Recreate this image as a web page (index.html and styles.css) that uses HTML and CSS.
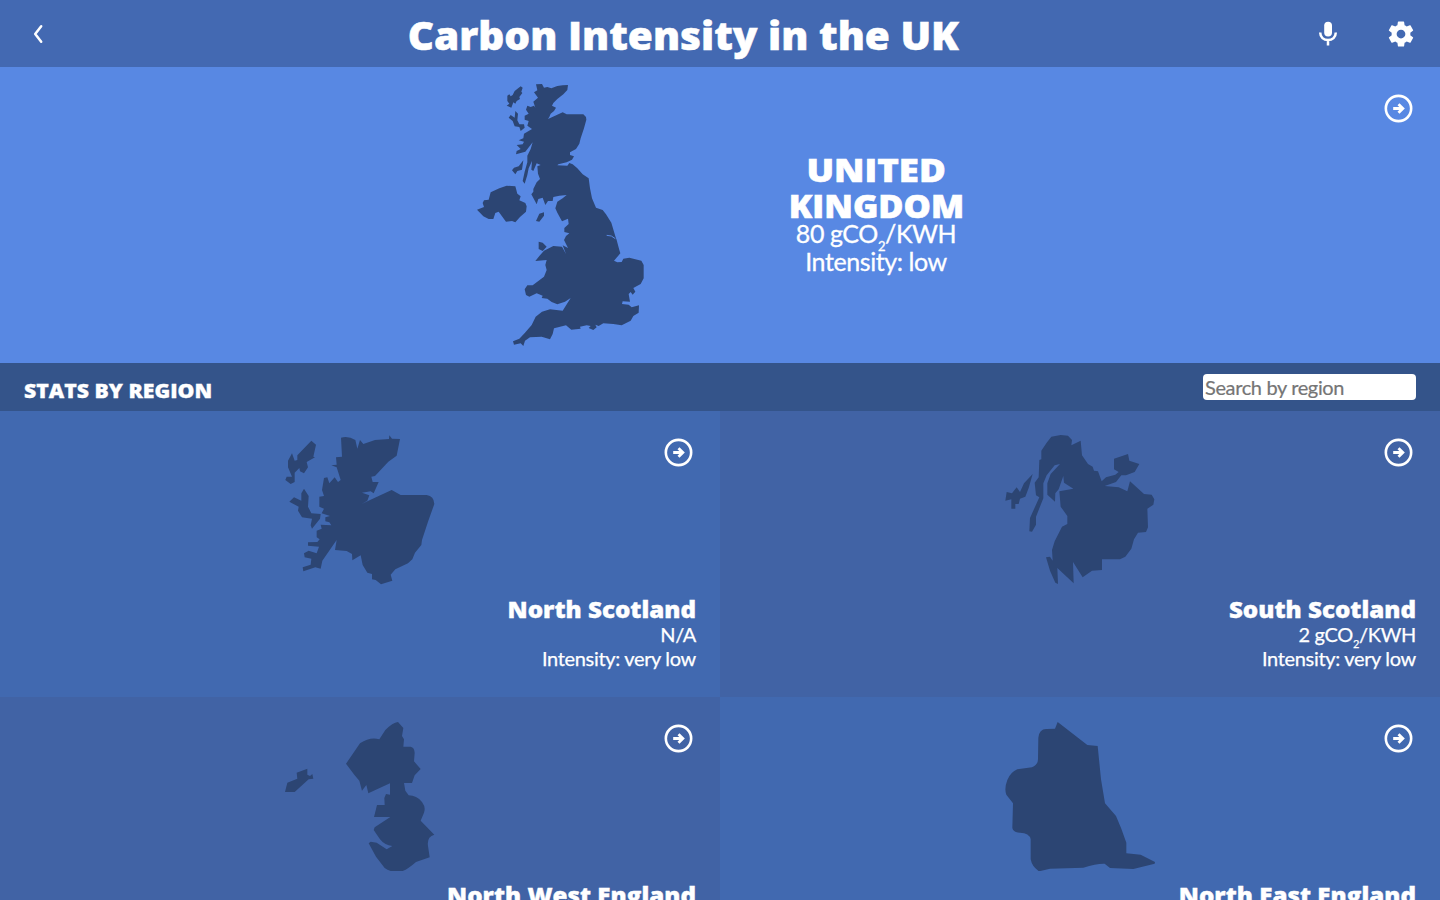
FILE: index.html
```html
<!DOCTYPE html>
<html lang="en">
<head>
<meta charset="utf-8">
<title>Carbon Intensity in the UK</title>
<link rel="stylesheet" href="styles.css">
</head>
<body>
<svg class="symbols" aria-hidden="true">
  <symbol id="arrow" viewBox="0 0 30 30">
    <circle cx="15" cy="15" r="13.1" fill="none" stroke="#fff" stroke-width="2.7"/>
    <path d="M9.5 15h9M15 10.5l4.5 4.5-4.5 4.5" fill="none" stroke="#fff" stroke-width="2.9"/>
  </symbol>
</svg>
<header class="topbar">
  <button class="back" aria-label="Back"><svg width="12" height="20" viewBox="0 0 12 20"><path d="M9.2 2.3 3.2 10l6 7.7" fill="none" stroke="#fff" stroke-width="2.5" stroke-linecap="round" stroke-linejoin="round"/></svg></button>
  <h1 class="title">Carbon Intensity in the UK</h1>
  <div class="tools">
    <svg width="28" height="28" viewBox="0 0 28 28"><rect x="10.2" y="1.7" width="7.8" height="14.7" rx="3.9" fill="#fff"/><path d="M6.2 12.6c0 4.5 3.4 7.5 7.8 7.5s7.8-3 7.8-7.5M14 20v5.5" fill="none" stroke="#fff" stroke-width="2.5"/></svg>
    <svg width="30" height="30" viewBox="0 0 24 24"><path fill="#fff" d="M19.43 12.98c.04-.32.07-.64.07-.98s-.03-.66-.07-.98l2.11-1.65c.19-.15.24-.42.12-.64l-2-3.46c-.12-.22-.39-.3-.61-.22l-2.49 1c-.52-.4-1.08-.73-1.69-.98l-.38-2.65C14.46 2.18 14.25 2 14 2h-4c-.25 0-.46.18-.49.42l-.38 2.65c-.61.25-1.17.59-1.69.98l-2.49-1c-.23-.09-.49 0-.61.22l-2 3.46c-.13.22-.07.49.12.64l2.11 1.65c-.04.32-.07.65-.07.98s.03.66.07.98l-2.11 1.65c-.19.15-.24.42-.12.64l2 3.46c.12.22.39.3.61.22l2.49-1c.52.4 1.08.73 1.69.98l.38 2.65c.03.24.24.42.49.42h4c.25 0 .46-.18.49-.42l.38-2.65c.61-.25 1.17-.59 1.69-.98l2.49 1c.23.09.49 0 .61-.22l2-3.46c.12-.22.07-.49-.12-.64l-2.11-1.65zM12 15.5c-1.93 0-3.5-1.57-3.5-3.5s1.57-3.5 3.5-3.5 3.5 1.57 3.5 3.5-1.57 3.5-3.5 3.5z"/></svg>
  </div>
</header>

<section class="hero">
  <svg class="uk" viewBox="21 24 504 795">
    <path d="M198 28 216 27 222 38 232 36 244 40 262 33 278 31 294 30 292 45 280 58 262 72 250 84 246 92 258 98 252 108 242 116 238 126 234 132 252 124 278 112 290 118 340 118 348 126 349 134 342 160 332 190 328 206 318 222 300 232 300 240 312 244 306 254 290 262 265 268 262 271 292 272 298 264 308 268 322 280 338 298 356 310 360 340 366 370 378 398 398 405 408 418 424 443 436 484 440 495 448 525 451 535 432 557 442 562 455 561 460 551 478 548 514 557 521 570 521 610 512 627 490 639 496 650 488 659 482 651 476 657 480 680 458 679 456 687 476 689 485 697 507 691 506 713 490 723 482 737 455 751 430 747 400 745 386 753 376 749 380 757 370 765 356 759 362 753 350 751 330 755 332 761 304 764 288 751 252 760 248 777 240 793 215 785 180 787 165 797 160 813 152 805 132 809 129 799 148 791 165 773 185 750 197 725 216 710 240 703 278 707 302 669 285 680 262 688 245 681 232 671 215 669 218 662 200 655 178 665 168 660 164 643 172 631 188 631 222 605 230 585 226 570 230 555 196 558 208 543 222 527 250 513 276 515 288 537 278 511 294 519 282 495 288 483 298 475 283 471 283 459 296 447 294 431 276 439 262 413 256 400 262 380 278 370 290 360 268 362 250 366 248 378 234 378 226 390 218 368 205 372 200 388 184 358 190 350 190 342 200 322 210 312 204 296 202 274 212 270 200 265 190 288 184 284 186 258 176 280 172 300 164 326 158 318 164 290 172 262 172 242 182 222 188 202 166 230 138 238 140 228 152 222 140 210 158 208 162 200 146 196 160 190 162 176 186 162 172 152 176 138 164 134 164 122 176 116 168 104 172 92 182 96 192 92 196 98 190 80 204 68 192 52 202 46ZM152 34 158 38 154 50 157 54 148 66 150 72 140 78 136 86 130 82 124 98 110 92 118 86 112 78 112 62 118 58 122 64 128 60 134 48ZM136 108 144 116 142 136 148 148 162 148 164 158 152 168 148 156 134 154 128 138 116 128 122 120 134 128ZM160 256 156 284 142 288 136 298 126 286 132 278 146 274ZM62 352 88 340 110 332 136 334 142 356 152 364 148 376 166 384 170 394 168 410 150 426 136 442 126 438 108 440 86 410 76 414 70 432 56 432 40 424 21 404 42 396 38 384 42 376 56 374ZM208 416 222 412 222 422 208 440 198 438ZM206 500 218 503 230 515 218 528 206 522Z"/>
    <path class="estuary" d="M410 481 424 483 436 491"/>
  </svg>
  <div class="hero-info">
    <h2 class="hero-name"><span class="line-one">UNITED</span><span class="line-two">KINGDOM</span></h2>
    <p>80 gCO<small class="sub">2</small>/KWH</p>
    <p>Intensity: low</p>
  </div>
  <svg class="go"><use href="#arrow"/></svg>
</section>

<div class="stats">
  <h3 class="stats-title">STATS BY REGION</h3>
  <input class="search" type="text" placeholder="Search by region">
</div>

<main class="regions">
  <article class="region">
    <svg class="map" viewBox="15 15 450 450"><path d="M183 23Q205 17 226 30L232 56 240 30 250 42 285 30 327 27 328 16 336 26 360 27 350 77 325 95 285 138 274 140 278 156 296 156 281 190 272 184 246 188 268 196 262 212 245 222 275 208 335 180 362 195H440Q462 198 463 222L444 275 426 330 424 345 405 368 397 388 384 400 346 418 332 434 337 452 303 463 287 450 276 448V432L262 428 248 405 242 376 217 391 216 372 200 363 165 360 170 330 127 392 122 416 106 412 70 424 68 412 92 404 94 386 74 382 72 370 86 362 110 370 117 350 84 347 84 337 112 336 119 328 110 322V302L125 296 122 284 154 286 148 277 136 274 136 262 150 258 125 250 132 236 118 230V200L132 198 126 180 132 144 142 142 148 160 164 142 174 156 182 150 170 112 154 106 170 104 168 82 186 80ZM94 32 108 44 100 80 105 82 80 96 84 112 72 130 60 124 58 114 44 128 44 156 32 162 16 150 20 140 36 140 24 112 24 92 36 70 44 92 52 90 52 76ZM72 176 86 198 84 230 94 250 122 252 120 266 96 296 92 286 96 266 66 262 54 242 56 230 28 215 42 202 64 212 64 190Z"/></svg>
    <h2 class="name">North Scotland</h2>
    <p>N/A</p>
    <p>Intensity: very low</p>
    <svg class="go"><use href="#arrow"/></svg>
  </article>
  <article class="region alt">
    <svg class="map" viewBox="15 15 450 450"><path d="M140 38 154 20 182 15 204 17 216 30 214 46 242 32 246 76 264 102 278 110 282 122 294 124 305 154 318 142 346 134 356 126 342 118 342 86 384 72 388 92 418 102 404 126 378 136 364 136 348 156 314 168 356 172 382 184 390 154 432 192 455 194 463 208 460 224 442 236 444 292 438 306 414 308 402 328 394 356 376 380 360 388 306 388V420L276 422 248 442 219 396 221 460 172 414 174 462 166 458 150 422 138 382 150 380 158 392 156 360 164 334 186 290 202 282 202 258 182 230 178 184 220 176 192 158 190 138 176 178 166 190 165 215 142 194 142 160 152 132 180 102 164 106 140 136 130 160 130 205 108 260 108 284 96 305 88 304 90 264 118 202 108 196 104 158 116 142 118 90 124 88 124 62ZM98 132 86 174 76 200 60 206 56 222 46 222 46 236 34 236 34 208 16 212 20 186 36 190 50 172 60 186 72 160Z"/></svg>
    <h2 class="name">South Scotland</h2>
    <p>2 gCO<small class="sub">2</small>/KWH</p>
    <p>Intensity: very low</p>
    <svg class="go"><use href="#arrow"/></svg>
  </article>
  <article class="region alt">
    <svg class="map" viewBox="15 15 450 450"><path d="M198 143 240 82Q270 62 298 70L316 42Q338 20 354 18L370 36 366 60 372 70 370 92H392Q403 94 404 110L402 136 422 159 404 178 396 201H372L376 224 386 238Q410 238 426 258 438 274 432 290L422 314 463 356Q440 362 444 390L449 424 408 438Q374 468 354 468 330 468 314 456L288 422 266 382 272 377 290 380 320 400 337 390Q314 388 300 370L281 342 284 334 331 303H282L291 267H314L313 246 318 234 330 236V202L265 232 259 207 246 224 238 194 224 178ZM82 158V176L90 180 97 174 100 188 86 190 44 228H15L22 200 52 188 50 170Z"/></svg>
    <h2 class="name">North West England</h2>
    <p>37 gCO<small class="sub">2</small>/KWH</p>
    <p>Intensity: low</p>
    <svg class="go"><use href="#arrow"/></svg>
  </article>
  <article class="region">
    <svg class="map" viewBox="15 15 450 450"><path d="M173 18 262 87 293 90 303 190 315 262 348 300 364 338 379 380V412L422 416 465 438 464 443 400 459 330 456 314 443Q290 442 250 455L150 458 117 466Q96 452 92 430V370Q88 350 60 350 40 350 37 336L39 262 19 236Q12 218 22 192 32 168 52 160L96 154Q114 146 114 130L115 65Q118 38 140 39L165 38Z"/></svg>
    <h2 class="name">North East England</h2>
    <p>12 gCO<small class="sub">2</small>/KWH</p>
    <p>Intensity: very low</p>
    <svg class="go"><use href="#arrow"/></svg>
  </article>
</main>
</body>
</html>
```
FILE: styles.css
```css
* { box-sizing: border-box; margin: 0; padding: 0; }
body { height: 900px; overflow: hidden; background: #4369b0; color: #fff; font-family: Lato, sans-serif; }
svg { display: block; flex: none; }
.symbols { position: absolute; width: 0; height: 0; }

.topbar { height: 67px; display: grid; grid-template-columns: 124px 1fr 173px; align-items: center; padding: 0 24px 0 0; background: #4369b2; }
.back { justify-self: start; margin-left: 32px; background: none; border: 0; }
.title { justify-self: center; white-space: nowrap; font: 800 38px/50px "Open Sans", sans-serif; margin-top: 3px; transform: scaleX(1.067); -webkit-text-stroke: .5px #fff; }
.tools { display: flex; align-items: center; justify-content: flex-end; gap: 44px; }

.hero { position: relative; height: 296px; display: flex; justify-content: center; gap: 144px; padding-top: 16px; background: #5888e3; }
.uk { width: 168px; height: 265px; fill: #2c4573; }
.estuary { fill: none; stroke: #5888e3; stroke-width: 3; }
.hero-info { width: 174px; padding-top: 69px; text-align: center; font-size: 25px; line-height: 28px; letter-spacing: -.42px; white-space: nowrap; -webkit-text-stroke: .3px #fff; }
.hero-name { display: flex; flex-direction: column; align-items: center; margin-bottom: -5px; font: 800 31.5px/36px "Open Sans", sans-serif; letter-spacing: 0; -webkit-text-stroke: .6px #fff; }
.line-one { transform: scaleX(1.16); }
.line-two { transform: scaleX(1.09); }
.sub { font-size: 13px; line-height: 0; vertical-align: -8px; }
.go { position: absolute; top: 27px; right: 27px; width: 29px; height: 29px; }

.stats { height: 48px; display: flex; align-items: center; justify-content: space-between; padding: 0 24px; background: #34548a; }
.stats-title { font: 800 18.5px/28px "Open Sans", sans-serif; margin-top: 7px; transform: scaleX(1.148); transform-origin: left; -webkit-text-stroke: .3px #fff; }
.search { width: 213px; height: 26px; border: 0; border-radius: 4px; padding: 1px 2px; background: #fff; font: 20px Lato, sans-serif; letter-spacing: -.37px; }
.search::placeholder { color: #757575; -webkit-text-stroke: .2px #757575; }

.regions { display: grid; grid-template-columns: 1fr 1fr; grid-auto-rows: 286px; }
.region { position: relative; padding: 24px; background: #4169b0; text-align: right; font-size: 20px; line-height: 24px; letter-spacing: -.33px; -webkit-text-stroke: .25px #fff; }
.region.alt { background: #4163a5; }
.map { width: 150px; height: 150px; margin: 0 auto 11px; fill: #2c4573; -webkit-text-stroke: 0; }
.name { font: 800 23px/26px "Open Sans", sans-serif; letter-spacing: 0; transform: scaleX(1.05); transform-origin: right; -webkit-text-stroke: .4px #fff; }
.region .sub { font-size: 11px; vertical-align: -6px; }
```
